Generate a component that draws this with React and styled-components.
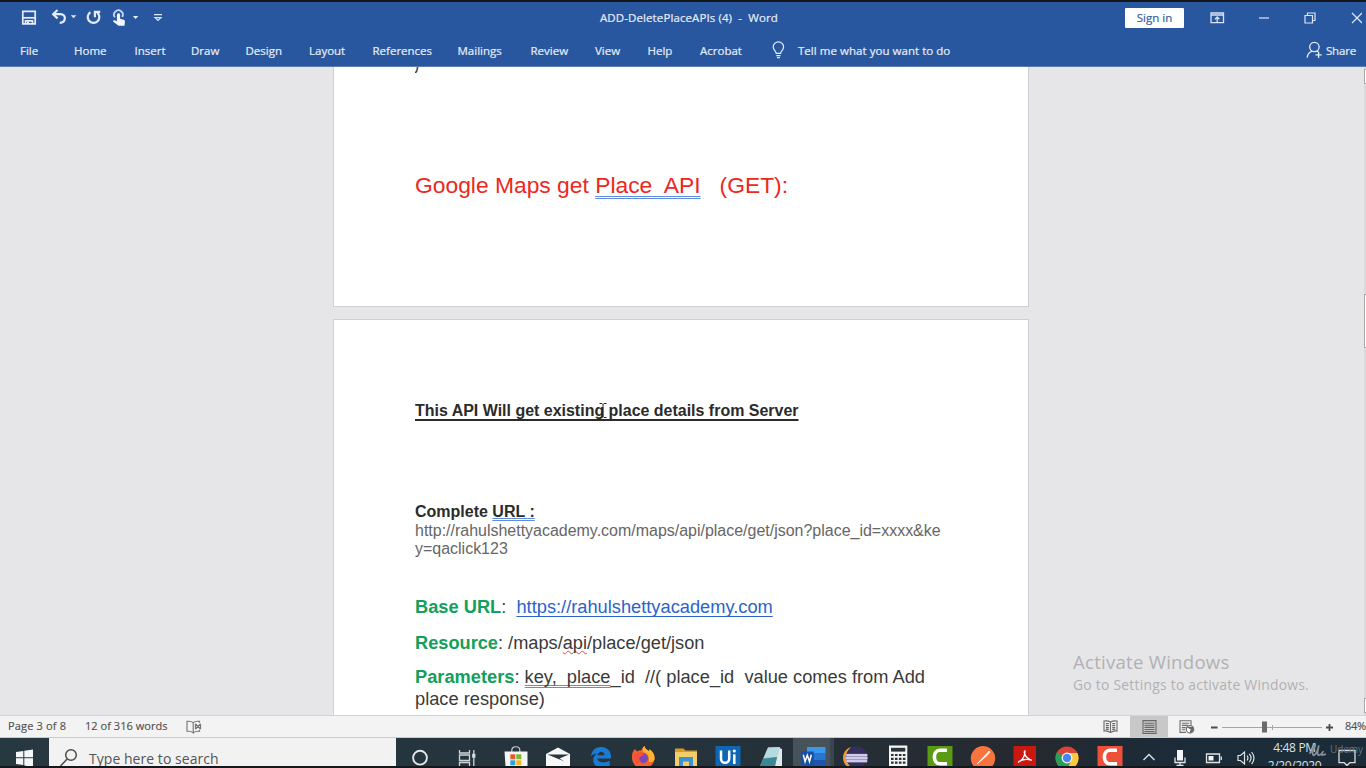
import React from "react";
import styled, { createGlobalStyle } from "styled-components";

const GlobalStyle = createGlobalStyle`
  * { box-sizing: border-box; }
  body { margin: 0; overflow: hidden; background: #14171c; }
  svg { display: block; }
`;

const ui = `"Open Sans", "Noto Sans", sans-serif`;

const Screen = styled.div`
  width: 1366px;
  height: 768px;
  padding: 2px 0;
  background: #14171c;
  display: flex;
  flex-direction: column;
  overflow: hidden;
  font-family: ${ui};
  position: relative;
`;

/* ---------- window header ---------- */
const Header = styled.header`
  flex: none;
  height: 65px;
  background: #29579f;
  border-bottom: 1px solid #5c7bb2;
  color: #e6edf8;
  -webkit-text-stroke: 0.2px;
`;
const TitleBar = styled.div`
  height: 31px;
  display: grid;
  grid-template-columns: 20px 31px 34px 27px 40px 448px 525px 85px 48px 46px 46px 1fr;
  align-items: center;
`;
const Title = styled.div`
  font-size: 11.5px;
  font-weight: 500;
  letter-spacing: 0.1px;
  line-height: 14px;
  white-space: pre;
`;
const SignIn = styled.button`
  width: 59px;
  height: 20px;
  padding: 0;
  border: 0;
  border-radius: 1px;
  background: #fff;
  color: #35609f;
  font: 500 11.5px ${ui};
`;
const Tabs = styled.nav`
  height: 33px;
  padding: 1px 0 0 20px;
  display: grid;
  grid-template-columns: 54px 60.5px 56.5px 54.5px 63.5px 63.5px 85px 73px 64.5px 52.5px 52.5px 72px 26px 508px 20px 1fr;
  align-items: center;
  font-size: 11.5px;
  font-weight: 500;
`;
const Tab = styled.span`
  white-space: nowrap;
  letter-spacing: ${(p) => p.$ls || 0}px;
`;

/* ---------- document ---------- */
const Workspace = styled.main`
  flex: none;
  height: 648px;
  background: #e6e6e8;
  display: flex;
  justify-content: space-between;
  overflow: hidden;
`;
const Pages = styled.div`
  width: 696px;
  margin-left: 333px;
  display: flex;
  flex-direction: column;
  gap: 12px;
`;
const Page = styled.section`
  height: ${(p) => p.$h}px;
  flex: none;
  background: #fff;
  border: 1px solid #d0d0d2;
  border-top-width: ${(p) => (p.$cut ? 0 : 1)}px;
  padding-left: 81px;
  font-family: "Liberation Sans", Arial, sans-serif;
  color: #3a3a3a;
  overflow: hidden;
`;
const Para = styled.p`
  margin: ${(p) => p.$top || 0}px 0 0;
  font-size: ${(p) => p.$size}px;
  line-height: ${(p) => p.$lh}px;
  font-weight: ${(p) => (p.$bold ? 700 : 400)};
  color: ${(p) => p.$color || "#3a3a3a"};
  white-space: pre;
`;
const Remainder = styled.div`
  height: 7px;
  display: flex;
  align-items: flex-end;
  overflow: hidden;
  font-size: 17px;
  font-style: italic;
  line-height: 18px;
`;
const Ruled = styled.span`
  text-decoration: underline 2px #2b2b2b;
  text-underline-offset: 3px;
  text-decoration-skip-ink: none;
`;
const Grammar = styled.span`
  text-decoration: underline double #5f8be0;
  text-decoration-thickness: 1.4px;
  text-underline-offset: ${(p) => p.$off || 2}px;
  text-decoration-skip-ink: none;
`;
const Spelling = styled.span`
  text-decoration: underline wavy #e0483e 1px;
  text-underline-offset: 1px;
  text-decoration-skip-ink: none;
`;
const Link = styled.a`
  color: #2a63cc;
  text-decoration: underline 1px;
  text-underline-offset: 3px;
  text-decoration-skip-ink: none;
`;
const Label = styled.b`
  color: #12a05c;
`;
const ScrollBar = styled.div`
  width: 2px;
  background: #dadadc;
  padding: 2px 0;
  display: flex;
  flex-direction: column;
`;
const ScrollPiece = styled.div`
  height: ${(p) => p.$h}px;
  margin-top: ${(p) => p.$top || 0}px;
  border: 1px solid #a9a9ab;
  border-right: 0;
  background: #fff;
`;

/* ---------- overlays ---------- */
const Caret = styled.svg`
  position: absolute;
  left: 598px;
  top: 402px;
`;
const Activate = styled.div`
  position: absolute;
  left: 1073px;
  top: 651px;
  color: #b1b1b3;
  white-space: nowrap;
`;
const ActivateTitle = styled.div`
  font-size: 18.6px;
  line-height: 22px;
  letter-spacing: 0.25px;
`;
const ActivateHint = styled.div`
  font-size: 13.9px;
  line-height: 23px;
  letter-spacing: 0.24px;
`;
const Watermark = styled.div`
  position: absolute;
  left: 1309px;
  top: 742px;
  display: flex;
  gap: 4px;
  align-items: center;
  color: #68737c;
  font-size: 10px;
  line-height: 15px;
  letter-spacing: -0.1px;
`;

/* ---------- status bar ---------- */
const Status = styled.footer`
  flex: none;
  height: 23px;
  background: #f3f3f3;
  border-top: 1px solid #d3d3d5;
  border-bottom: 1px solid #c9cbcd;
  display: grid;
  grid-template-columns: 77px 101px 904px 40px 38px 38px 139px 1fr;
  padding-left: 8px;
  align-items: center;
  font-size: 11px;
  font-weight: 500;
  color: #515151;
  white-space: nowrap;
  overflow: hidden;
  -webkit-text-stroke: 0.15px;
`;
const StatusText = styled.span`
  line-height: 14px;
  padding-bottom: 2px;
  letter-spacing: ${(p) => p.$ls || 0}px;
`;
const ViewCell = styled.div`
  height: 22px;
  display: flex;
  align-items: center;
  justify-content: center;
  padding-right: ${(p) => p.$inset || 0}px;
  background: ${(p) => (p.$on ? "#c8c8c8" : "transparent")};
`;

/* ---------- taskbar ---------- */
const TaskBar = styled.div`
  flex: none;
  height: 28px;
  background: linear-gradient(90deg, #263840, #25333c 50%, #25292f 76%, #1c2b37 84%, #1b2c38);
  display: flex;
  overflow: hidden;
`;
const Start = styled.div`
  flex: none;
  width: 49px;
  padding: 11px 0 0 16px;
`;
const Search = styled.div`
  flex: none;
  width: 347px;
  background: #f2f2f2;
  display: flex;
  gap: 10px;
  padding: 10px 0 0 10px;
  color: #555;
  font-size: 14px;
  line-height: 21px;
  letter-spacing: 0.04px;
  white-space: nowrap;
`;
const Apps = styled.div`
  display: grid;
  grid-template-columns: 48px 50.8px repeat(15, 42.43px) 35.6px 27px 40.4px 23.6px 73.6px 32.2px;
`;
const Slot = styled.div`
  height: 28px;
  display: flex;
  justify-content: center;
  padding-top: 6px;
  overflow: hidden;
  background: ${(p) => (p.$active ? "linear-gradient(90deg, transparent 1px, #46535b 1px, #46535b 38px, #39464e 38px)" : "transparent")};
`;
const Clock = styled.div`
  height: 28px;
  overflow: hidden;
  padding-top: 1px;
  text-align: center;
  color: #dde1e5;
  font-size: 12px;
  line-height: 18px;
  letter-spacing: -0.35px;
  white-space: nowrap;
`;

const Ico = ({ children, w = 26, h = 22, ...rest }) => (
  <svg width={w} height={h} viewBox={`0 0 ${w} ${h}`} fill="none" {...rest}>
    {children}
  </svg>
);

const Save = () => (
  <Ico w={17} h={17} stroke="#e6edf8" strokeWidth="1.7">
    <path d="M2.800 2.300h12.400v12.600H2.800z" />
    <path d="M3 8.800h12" />
    <path d="M5.500 14.500v-2.700h7v2.700" />
    <path d="M8 12.600v2" strokeWidth="2" />
  </Ico>
);
const Undo = () => (
  <Ico w={27} h={17}>
    <path d="M2.300 5.200h7.200c6.200 0 5.700 8.400-.8 8.700" stroke="#e6edf8" strokeWidth="2.200" />
    <path d="M6.500 1 2.200 5.200l4.300 4.200" stroke="#e6edf8" strokeWidth="2.200" />
    <path d="M19.800 6.300h5.600l-2.800 3z" fill="#e6edf8" />
  </Ico>
);
const Redo = () => (
  <Ico w={17} h={17} stroke="#e6edf8" strokeWidth="2.200">
    <path d="M5.400 3.200a5.800 5.800 0 1 0 6.800.4" />
    <path d="M15.200 2.900H9.900v5.400" />
  </Ico>
);
const Touch = () => (
  <Ico w={28} h={18}>
    <path d="M2.800 8.300a4.400 4.400 0 1 1 7.400-.4" stroke="#c8d7ee" strokeWidth="1.800" />
    <path d="M4.900 5.800c0-2.100 3.200-2.100 3.200 0v4l3.500 1c1 .3 1.400 1 1.300 2l-.4 4H6.600L1.300 12.800c-.7-1.200.5-2 1.700-1.400l1.900.8z" fill="#f2f6fc" />
    <path d="M20.800 7h5.600l-2.800 3z" fill="#e6edf8" />
  </Ico>
);
const Customize = () => (
  <Ico w={12} h={10} stroke="#dbe5f4" strokeWidth="1.200">
    <path d="M2 1.600h8M3 4.600l3 2.800 3-2.800z" />
  </Ico>
);
const RibbonMode = () => (
  <Ico w={15} h={12} stroke="#d6e1f2" strokeWidth="1.300">
    <path d="M1 1h12.500v9.600H1zM1 3h12.500" />
    <path d="M7.200 10V5.200M5 7.200l2.200-2.200 2.200 2.200" />
  </Ico>
);
const Minimize = () => (
  <Ico w={11} h={12} stroke="#dbe5f4" strokeWidth="1.200">
    <path d="M1 6h10" />
  </Ico>
);
const Restore = () => (
  <Ico w={12} h={12} stroke="#dbe5f4" strokeWidth="1.200">
    <path d="M1 3.500h7.500V11H1zM3.500 3V1H11v7.500H8.800" />
  </Ico>
);
const Close = () => (
  <Ico w={12} h={12} stroke="#dbe5f4" strokeWidth="1.300">
    <path d="m2 1 10 10M12 1 2 11" />
  </Ico>
);
const Bulb = () => (
  <Ico w={13} h={18} stroke="#e6edf8" strokeWidth="1.200">
    <path d="M4.200 12.400c0-2.400-3-3.400-3-6.400a5.200 5.200 0 0 1 10.400 0c0 3-3 4-3 6.400zM4.300 14.600h4.200M5 16.600h2.900" />
  </Ico>
);
const Person = () => (
  <Ico w={18} h={18} stroke="#e6edf8" strokeWidth="1.300">
    <circle cx="8.400" cy="6" r="4.700" />
    <path d="M1.200 16.600c.3-3.600 1.900-5.400 4.600-6.300M10.600 9.800l1.700 1.200M12.600 10.800v6.200M9.500 13.900h6.200" />
  </Ico>
);

const Proofing = () => (
  <Ico w={16} h={14} stroke="#757575" strokeWidth="1.100">
    <path d="M7.200 2.600C5.500 1.200 3.500 1 1 1.300v10c2.500-.3 4.500 0 6.200 1.500zM7.200 2.600C8.600 1.300 10.500 1 13.500 1.300v1.500M7.200 12.800c1.300-1.200 3.300-1.700 6.300-1.500v-1.500" />
    <path d="m9.500 4 5 5M14.500 4l-5 5M9.500 3.800v5.500M14.500 3.800v5.500" strokeWidth="1.200" />
  </Ico>
);
const ReadMode = () => (
  <Ico w={15} h={14} stroke="#6b6b6b" strokeWidth="1.100">
    <path d="M7.500 2C5.500.8 3.500.6 1 1v10c2.500-.4 4.500 0 6.500 1.500C9.500 11 11.500 10.600 14 11V1c-2.500-.4-4.500-.2-6.500 1zM7.500 2v10.500" />
    <path d="M2.800 3.600h3M2.800 5.600h3M2.800 7.600h3M2.800 9.400h3M9.200 3.600h3M9.200 5.600h3M9.200 7.600h3M9.200 9.400h3" />
  </Ico>
);
const PrintLayout = () => (
  <Ico w={15} h={14} stroke="#686868" strokeWidth="1.100">
    <path d="M1 .6h13v12.800H1zM2.500 3.200h10M2.500 5.300h10M2.500 7.400h10M2.500 9.500h10M2.500 11.500h10" />
  </Ico>
);
const WebLayout = () => (
  <Ico w={16} h={14} stroke="#6b6b6b" strokeWidth="1.100">
    <path d="M12 5V.8H1v11.600h6M2.800 3.200h7.500M2.800 5.400h6M2.800 7.600h4M2.800 9.800h3.400" />
    <circle cx="11" cy="9.300" r="3.700" fill="#fff" />
    <path d="M8.500 7.500c2-.8 2 1.800 3.500 1.200.5 1.500-.6 2-.6 3.800 2.500-.6 3.600-3 2.500-5z" fill="#6b6b6b" />
  </Ico>
);
const Zoom = () => (
  <Ico w={124} h={14}>
    <path d="M1 7.500h6.500M116 7.500h7M119.500 4v7" stroke="#4c4c4c" strokeWidth="1.800" />
    <path d="M12 7.500h100" stroke="#a6a6a6" />
    <path d="M62.500 5v5" stroke="#a6a6a6" />
    <path d="M52 1.500h5v11h-5z" fill="#6b6b6b" />
  </Ico>
);

const WindowsLogo = () => (
  <Ico w={17} h={18} fill="#f4f6f7">
    <path d="M0 3 7.300 2v6.300H0zM8.300 1.800 17 .6v7.700H8.300zM0 9.300h7.300V16L0 15zM8.300 9.300H17V18l-8.700-1.400z" />
  </Ico>
);
const Magnifier = () => (
  <Ico w={20} h={20} stroke="#4b4b4b" strokeWidth="1.500">
    <circle cx="12" cy="7" r="5.300" />
    <path d="M8.200 11 1.500 18" />
  </Ico>
);
const CortanaIcon = () => (
  <Ico>
    <circle cx="13" cy="13.700" r="6.900" stroke="#e4e7ea" strokeWidth="1.900" />
  </Ico>
);
const TaskViewIcon = () => (
  <Ico stroke="#cfd5d9" strokeWidth="1.300">
    <path d="M3.500 6v3h10V6M3.500 22v-3.500h10V22M3.500 11h10v5.500h-10zM17.800 6v16" />
    <path d="M16.800 10.500h2v2.500h-2z" fill="#fff" />
  </Ico>
);
const StoreIcon = () => (
  <Ico>
    <path d="M8.800 8V6.200C8.800 1.600 16.800 1.600 16.800 6.200V8" stroke="#c9cdd0" strokeWidth="1.200" />
    <path d="M1.500 7.500h23V22h-22z" fill="#f5f5f5" />
    <path d="M7.300 10.300h5v5h-5z" fill="#e35a33" />
    <path d="M13.300 10.300h5v5h-5z" fill="#7fb62c" />
    <path d="M7.300 16.300h5v5h-5z" fill="#2f9fe0" />
    <path d="M13.300 16.300h5v5h-5z" fill="#f3b71d" />
  </Ico>
);
const MailIcon = () => (
  <Ico>
    <path d="M1 10 13 3.500 25 10v12H1z" fill="#f7f7f7" />
    <path d="M2.500 10.500h21.500L14.500 14.500l5 3z" fill="#27363f" />
  </Ico>
);
const EdgeIcon = () => (
  <Ico>
    <path d="M3 12.300C3.800 6 8 3 13 3c6.500 0 10 4.400 10 9.600v2H9.300c.5 4 6.500 5 12.400 2.200V22H7.600C4 18 4.500 12.500 9 9.600 6.600 9.700 4.600 10.600 3 12.300z" fill="#1a7bd4" />
    <path d="M9.500 11.300h7c0-4.700-6.400-4.700-7 0z" fill="#26343d" />
  </Ico>
);
const FirefoxIcon = () => (
  <Ico>
    <path d="M2 13c0-4 1-6 3-8l2 2.500C9 6 10.500 6.200 11.500 6.300 12 4 13 3 14.600 2c.4 3 2.200 3.300 4.200 5.200l.8-2C23.500 8 25 11.500 24.500 15.500 23.800 19 21.500 22 19 23H7C4 21 2 17.500 2 13z" fill="#f5602d" />
    <path d="M14.600 2c.4 3 2.200 3.300 4.200 5.200l.8-2C23.500 8 25 11.500 24.500 15.500c-1.500 2.500-4.500 3.500-6 2 1.500-5-1-8.500-5.500-9.500-1-2.500 0-4.800 1.600-6z" fill="#ffb52d" />
    <circle cx="13" cy="14.300" r="5" fill="#7a48b8" />
    <path d="M4 11c2-3 5-3 7-2l3 1.600c-1 2-3 1.400-4.300 2.400-1.200 1.500.3 4.500 3.300 5.500H7C4.500 16.500 3.500 13.500 4 11z" fill="#f5503a" />
  </Ico>
);
const FolderIcon = () => (
  <Ico>
    <path d="M2 4.500h8.500l2 2H24V22H2z" fill="#d99a27" />
    <path d="M2 8h22v14H2z" fill="#f6cc67" />
    <path d="M6 22v-9h14v9h-4v-4.500h-6V22z" fill="#3c92d3" />
  </Ico>
);
const UiIcon = () => (
  <Ico>
    <path d="M.5 2h25v20H.5z" fill="#0f66b3" />
    <path d="M6 6.500v8.300c0 5.400 8.200 5.400 8.200 0V6.500M19.300 10.200V20" stroke="#fff" strokeWidth="2.500" />
    <circle cx="19.300" cy="7" r="1.600" fill="#fff" />
  </Ico>
);
const NotepadIcon = () => (
  <Ico>
    <path d="M10 3.500 22 3l-4 19H2z" fill="#6fb0bd" />
    <path d="M10 3.500 22 3l-2.500 10L5.500 14z" fill="#b4dbe0" />
    <path d="m21.500 4 2.500 1v17h-7z" fill="#dfe9ea" />
    <path d="M2 22 5 15l14-2-2 9z" fill="#3f8795" />
  </Ico>
);
const WordIcon = () => (
  <Ico>
    <path d="M7 3h18.500v7H7z" fill="#3a98ea" />
    <path d="M7 9h18.500v7H7z" fill="#2a74cf" />
    <path d="M7 16h18.500v6H7z" fill="#1d55ac" />
    <path d="M.8 7.500h13v13.500H.8z" fill="#1a4fa3" />
    <path d="m3.300 10.800 1.800 6.800 2.200-6.300 2.200 6.300 1.800-6.800" stroke="#fff" strokeWidth="1.500" />
  </Ico>
);
const EclipseIcon = () => (
  <Ico>
    <path d="M9 3C-1 6-1 19 6 23L8 22C3 17 3 9 9 3z" fill="#f09a36" />
    <circle cx="14.700" cy="13" r="10.700" fill="#352e60" />
    <path d="M4.300 9.800h21v8.500h-21z" fill="#8f89b8" />
    <path d="M4.300 10h21v2.200h-21zM4 13h21.500v2.200H4zM4.400 16h20.700v2.200H4.400z" fill="#cfcae6" />
  </Ico>
);
const CalcIcon = () => (
  <Ico>
    <path d="M4 1.500h18.300V22H4z" fill="#f6f6f6" />
    <path d="M6 3.800h14.300v3.800H6z" fill="#2a333a" />
    <path d="M6 11h14.500M6 14.800h14.500M6 18.600h14.500" stroke="#2a333a" strokeWidth="2.200" strokeDasharray="2.600 1.350" />
  </Ico>
);
const Camtasia = ({ bg }) => (
  <Ico>
    <path d="M.5 2h25v20H.5z" fill={bg} />
    <path d="M20 6.300h-7c-7.500 0-7.500 13.500 0 13.500h7" stroke="#fff" strokeWidth="3.600" />
  </Ico>
);
const PostmanIcon = () => (
  <Ico>
    <circle cx="13" cy="14.300" r="12.200" fill="#f7743f" />
    <path d="m7 20 9-9.500 3-3.500 1 1-3 3.500z" fill="#ffe6da" stroke="#fff" strokeWidth=".8" />
  </Ico>
);
const AcrobatIcon = () => (
  <Ico>
    <path d="M1.500 2h22.500v20H1.500z" fill="#c91712" />
    <path d="M6 18.500c4-1.500 7.500-7 7-11.500-1.800 0-.6 6.500 6.800 9.300M6 18.300c3-2.500 8.500-3.600 13.500-2.300" stroke="#fff" strokeWidth="1.300" />
  </Ico>
);
const ChromeIcon = () => (
  <Ico>
    <circle cx="13" cy="14" r="11.500" fill="#dc4437" />
    <path d="M3 8.300A11.500 11.500 0 0 0 13 25.500L16 18 13 14z" fill="#28a05a" />
    <path d="M13 9h10.400A11.500 11.500 0 0 1 13 25.500L17.500 16z" fill="#fbcb3f" />
    <circle cx="13" cy="14" r="5.400" fill="#f5f5f5" />
    <circle cx="13" cy="14" r="4.200" fill="#4488ee" />
  </Ico>
);
const ChevronUp = () => (
  <Ico w={14} stroke="#d5dadd" strokeWidth="1.500">
    <path d="m1.500 16 5.500-5.500 5.500 5.500" />
  </Ico>
);
const MicIcon = () => (
  <Ico w={14}>
    <path d="M4 6h6v10.500H4z" fill="#f3f5f6" />
    <path d="M2 13.500v5h10v-5M7 18v3.500M3.500 21.500h7" stroke="#e3e7ea" strokeWidth="1.300" />
  </Ico>
);
const BatteryIcon = () => (
  <Ico w={18} stroke="#e0e4e7" strokeWidth="1.300">
    <path d="M1.500 10h13v8.500h-13zM16.300 12.500v3.500" />
    <path d="M3.500 12h5v4.500h-5z" fill="#f4f6f7" stroke="none" />
  </Ico>
);
const SpeakerIcon = () => (
  <Ico w={18} stroke="#dfe4e7" strokeWidth="1.200">
    <path d="M1 11.500h2.500l4-3.500v12l-4-3.500H1zM10 11.500c1.300 1.700 1.300 3.300 0 5M12.300 9.800c2.300 2.700 2.300 5.700 0 8.400M14.600 8c3.200 4 3.200 8 0 12" />
  </Ico>
);
const NoticeIcon = () => (
  <Ico w={20} stroke="#d9dee1" strokeWidth="1.300">
    <path d="M2 6.500h16v12.200h-5.200L10 21.500l-2.800-2.800H2z" />
  </Ico>
);

const tabs = [
  "File", "Home", "Insert", "Draw", "Design", "Layout", "References",
  "Mailings", "Review", "View", "Help", "Acrobat",
];

const apps = [
  CortanaIcon, TaskViewIcon, StoreIcon, MailIcon, EdgeIcon, FirefoxIcon, FolderIcon, UiIcon,
  NotepadIcon, WordIcon, EclipseIcon, CalcIcon, () => <Camtasia bg="#5a9b13" />, PostmanIcon,
  AcrobatIcon, ChromeIcon, () => <Camtasia bg="#ee5138" />, ChevronUp, MicIcon, BatteryIcon, SpeakerIcon,
];

export default function App() {
  return (
    <>
      <GlobalStyle />
      <Screen>
        <Header>
          <TitleBar>
            <span />
            <Save />
            <Undo />
            <Redo />
            <Touch />
            <Customize />
            <Title>ADD-DeletePlaceAPIs (4)  -  Word</Title>
            <SignIn>Sign in</SignIn>
            <RibbonMode />
            <Minimize />
            <Restore />
            <Close />
          </TitleBar>
          <Tabs>
            {tabs.map((t) => (
              <Tab key={t}>{t}</Tab>
            ))}
            <Bulb />
            <Tab $ls={0.04}>Tell me what you want to do</Tab>
            <Person />
            <Tab $ls={-0.2}>Share</Tab>
          </Tabs>
        </Header>

        <Workspace>
          <Pages>
            <Page $h={240} $cut>
              <Remainder>{"}"}</Remainder>
              <Para $top={97} $size={22.84} $lh={28} $color="#ec281d">
                Google Maps get <Grammar $off={3}>Place  API</Grammar>   (GET):
              </Para>
            </Page>
            <Page $h={420}>
              <Para $top={80} $size={15.97} $lh={22} $bold $color="#2b2b2b">
                <Ruled>This API Will get existing place details from Server</Ruled>
              </Para>
              <Para $top={81} $size={16} $lh={18} $bold $color="#2b2b2b">
                Complete <Grammar $off={1}>URL :</Grammar>
              </Para>
              <Para $top={1} $size={15.98} $lh={18} $color="#666">
                {"http://rahulshettyacademy.com/maps/api/place/get/json?place_id=xxxx&ke\ny=qaclick123"}
              </Para>
              <Para $top={38} $size={18.25} $lh={22}>
                <Label>Base URL</Label>:  <Link>https://rahulshettyacademy.com</Link>
              </Para>
              <Para $top={14} $size={18.22} $lh={22}>
                <Label>Resource</Label>: /maps/<Spelling>api</Spelling>/place/get/json
              </Para>
              <Para $top={12} $size={18.26} $lh={22}>
                <Label>Parameters</Label>: <Grammar>key,  place</Grammar>_id  //( place_id  value comes from Add{"\n"}place response)
              </Para>
            </Page>
          </Pages>
          <ScrollBar>
            <ScrollPiece $h={15} />
            <ScrollPiece $h={54} $top={210} />
            <ScrollPiece $h={15} $top={350} />
          </ScrollBar>
        </Workspace>

        <Status>
          <StatusText $ls={0.16}>Page 3 of 8</StatusText>
          <StatusText $ls={0.04}>12 of 316 words</StatusText>
          <Proofing />
          <ViewCell><ReadMode /></ViewCell>
          <ViewCell $on><PrintLayout /></ViewCell>
          <ViewCell><WebLayout /></ViewCell>
          <ViewCell $inset={7}><Zoom /></ViewCell>
          <StatusText $ls={-0.3}>84%</StatusText>
        </Status>

        <TaskBar>
          <Start><WindowsLogo /></Start>
          <Search><Magnifier />Type here to search</Search>
          <Apps>
            {apps.map((Icon, i) => (
              <Slot key={i} $active={Icon === WordIcon}><Icon /></Slot>
            ))}
            <Clock>4:48 PM<br />2/20/2020</Clock>
            <Slot><NoticeIcon /></Slot>
          </Apps>
        </TaskBar>

        <Caret width="10" height="17" viewBox="0 0 10 17" fill="none" stroke="#222" strokeWidth="1">
          <path d="M1.500 1.500h2.500l1 1 1-1h2.500M5 2.500v12M1.500 15.500h2.500l1-1 1 1h2.500" />
        </Caret>
        <Activate>
          <ActivateTitle>Activate Windows</ActivateTitle>
          <ActivateHint>Go to Settings to activate Windows.</ActivateHint>
        </Activate>
        <Watermark>
          <svg width="17" height="14" viewBox="0 0 17 14" fill="none" stroke="#87919a" strokeWidth="1.800" strokeLinecap="round">
            <path d="M1 10C4 7 6.500 3 6.300 1.500 4.500 2 2.500 11.500 4.500 12.300 7 12 9.500 6 9.800 2.500 8.500 7 7.800 12 9.800 12.300c2 0 3-2 4.200-3.500M13 12c.8-.2 2 0 3.300-.7" />
          </svg>
          Udemy
        </Watermark>
      </Screen>
    </>
  );
}
